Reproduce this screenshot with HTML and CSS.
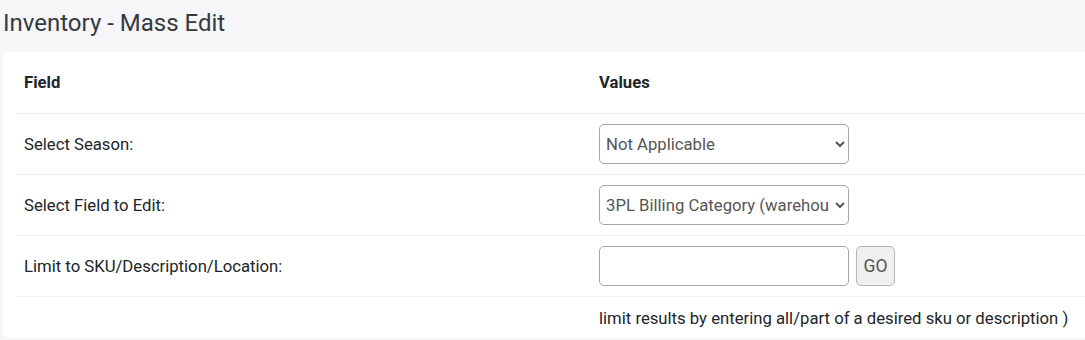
FILE: index.html
```html
<!DOCTYPE html>
<html>
<head>
	<meta charset="utf-8">
	<title>Inventory - Mass Edit</title>
	<link rel="stylesheet" href="styles.css">
</head>
<body>

	<h1 class="page-title">Inventory - Mass Edit</h1>

	<div class="card">
		<table class="edit-table">
			<tr>
				<th class="col-field">Field</th>
				<th>Values</th>
			</tr>
			<tr>
				<td>Select Season:</td>
				<td>
					<select class="picker">
						<option>Not Applicable</option>
					</select>
				</td>
			</tr>
			<tr>
				<td>Select Field to Edit:</td>
				<td>
					<select class="picker">
						<option>3PL Billing Category (warehouse)</option>
					</select>
				</td>
			</tr>
			<tr>
				<td>Limit to SKU/Description/Location:</td>
				<td>
					<div class="search-row">
						<input type="text" class="search-box">
						<button class="go-button">GO</button>
					</div>
				</td>
			</tr>
			<tr class="hint-row">
				<td></td>
				<td>limit results by entering all/part of a desired sku or description )</td>
			</tr>
		</table>
	</div>

</body>
</html>
```

FILE: styles.css
```css
body {
	margin: 0;
	background-color: #f6f6f9;
	font-family: Roboto, "Liberation Sans", sans-serif;
	color: #212529;
	overflow: hidden;
}

.page-title {
	margin: 0;
	padding: 8px 3px 0 3px;
	height: 52px;
	box-sizing: border-box;
	font-size: 24px;
	line-height: 30px;
	font-weight: normal;
	color: #343a40;
}

.card {
	margin-left: 2px;
	width: calc(100% + 20px);
	background-color: #fff;
	border-radius: 6px;
	padding: 0 14px 0 14px;
	box-sizing: border-box;
	height: 286px;
	box-shadow: 0 1px 2px rgba(0, 0, 0, 0.06);
}

.edit-table {
	width: 100%;
	border-collapse: collapse;
	font-size: 16.7px;
}

.edit-table th {
	text-align: left;
	font-weight: bold;
	height: 61px;
	padding: 0 8px;
	border-bottom: 1px solid #eceef1;
}

.edit-table td {
	height: 60px;
	padding: 0 8px;
	border-bottom: 1px solid #eceef1;
}

.col-field {
	width: 559px;
}

.edit-table .hint-row td {
	border-bottom: none;
	height: 41px;
	padding-top: 1px;
}

.picker {
	width: 250px;
	height: 40px;
	border: 1px solid #a6a6a6;
	border-radius: 5px;
	background-color: #fff;
	font-family: Roboto, "Liberation Sans", sans-serif;
	font-size: 16.7px;
	color: #555;
	padding: 0 2px;
}

.search-row {
	display: flex;
	gap: 7px;
}

.search-box {
	width: 250px;
	height: 40px;
	box-sizing: border-box;
	border: 1px solid #a6a6a6;
	border-radius: 5px;
	margin: 0;
}

.go-button {
	width: 39px;
	height: 40px;
	padding: 0;
	border: 1px solid #b5b5b5;
	border-radius: 5px;
	background-color: #efefef;
	font-family: Roboto, "Liberation Sans", sans-serif;
	font-size: 17.5px;
	color: #555;
}
```
